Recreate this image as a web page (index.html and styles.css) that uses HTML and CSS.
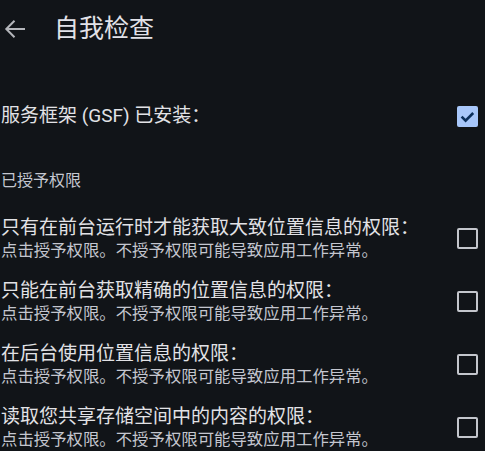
FILE: index.html
```html
<!DOCTYPE html>
<html lang="zh-CN">
<head>
<meta charset="utf-8">
<link rel="stylesheet" href="styles.css">
</head>
<body>
<div class="app">
  <header class="topbar">
    <span class="back">
      <svg width="22" height="20" viewBox="0 0 22 20"><path d="M3 10H21M10.5 1.8 2.3 10l8.2 8.2" fill="none" stroke="#b4b6bb" stroke-width="2"/></svg>
    </span>
    <h1 class="title">自我检查</h1>
  </header>
  <div class="row gsf">
    <div class="row-text"><div class="row-title">服务框架 (GSF) 已安装：</div></div>
    <span class="box checked">
      <svg width="21" height="21" viewBox="0 0 21 21"><path d="M4.6 10.6l4 4 7.6-7.6" fill="none" stroke="#0b2f5b" stroke-width="2.6"/></svg>
    </span>
  </div>
  <div class="section">已授予权限</div>
  <div class="row perm">
    <div class="row-text">
      <div class="row-title">只有在前台运行时才能获取大致位置信息的权限：</div>
      <div class="row-sub">点击授予权限。不授予权限可能导致应用工作异常。</div>
    </div>
    <span class="box"></span>
  </div>
  <div class="row perm">
    <div class="row-text">
      <div class="row-title">只能在前台获取精确的位置信息的权限：</div>
      <div class="row-sub">点击授予权限。不授予权限可能导致应用工作异常。</div>
    </div>
    <span class="box"></span>
  </div>
  <div class="row perm">
    <div class="row-text">
      <div class="row-title">在后台使用位置信息的权限：</div>
      <div class="row-sub">点击授予权限。不授予权限可能导致应用工作异常。</div>
    </div>
    <span class="box"></span>
  </div>
  <div class="row perm">
    <div class="row-text">
      <div class="row-title">读取您共享存储空间中的内容的权限：</div>
      <div class="row-sub">点击授予权限。不授予权限可能导致应用工作异常。</div>
    </div>
    <span class="box"></span>
  </div>
</div>
</body>
</html>
```
FILE: styles.css
```css
html, body {
  margin: 0;
  padding: 0;
  background: #111418;
}
body {
  font-family: "Roboto", "Noto Sans CJK SC", sans-serif;
  color: #e2e2e6;
  overflow: hidden;
}
.app {
  width: 485px;
  height: 451px;
}
.topbar {
  height: 58px;
  display: flex;
  align-items: center;
}
.back {
  width: 22px;
  height: 20px;
  margin-left: 4px;
  display: flex;
}
.title {
  margin: 0 0 0 28px;
  font-size: 25px;
  font-weight: 400;
  color: #e2e2e8;
  line-height: 30px;
}
.row {
  display: flex;
  align-items: center;
  justify-content: space-between;
  padding: 0 7px 0 1px;
}
.gsf {
  height: 58px;
  margin-top: 29px;
}
.row-title {
  font-size: 19px;
  line-height: 24px;
  color: #e2e2e6;
}
.row-sub {
  font-size: 16.4px;
  line-height: 22px;
  color: #c4c6cf;
}
.section {
  font-size: 16px;
  line-height: 22px;
  color: #c4c7d0;
  padding-left: 1px;
  margin-top: 25px;
}
.perm {
  height: 63px;
}
.section + .perm {
  margin-top: 15px;
}
.box {
  width: 21px;
  height: 21px;
  box-sizing: border-box;
  border: 2px solid #c4c6cc;
  border-radius: 2px;
  flex: none;
  display: flex;
}
.box.checked {
  border: none;
  background: #a8c7fa;
}
```
